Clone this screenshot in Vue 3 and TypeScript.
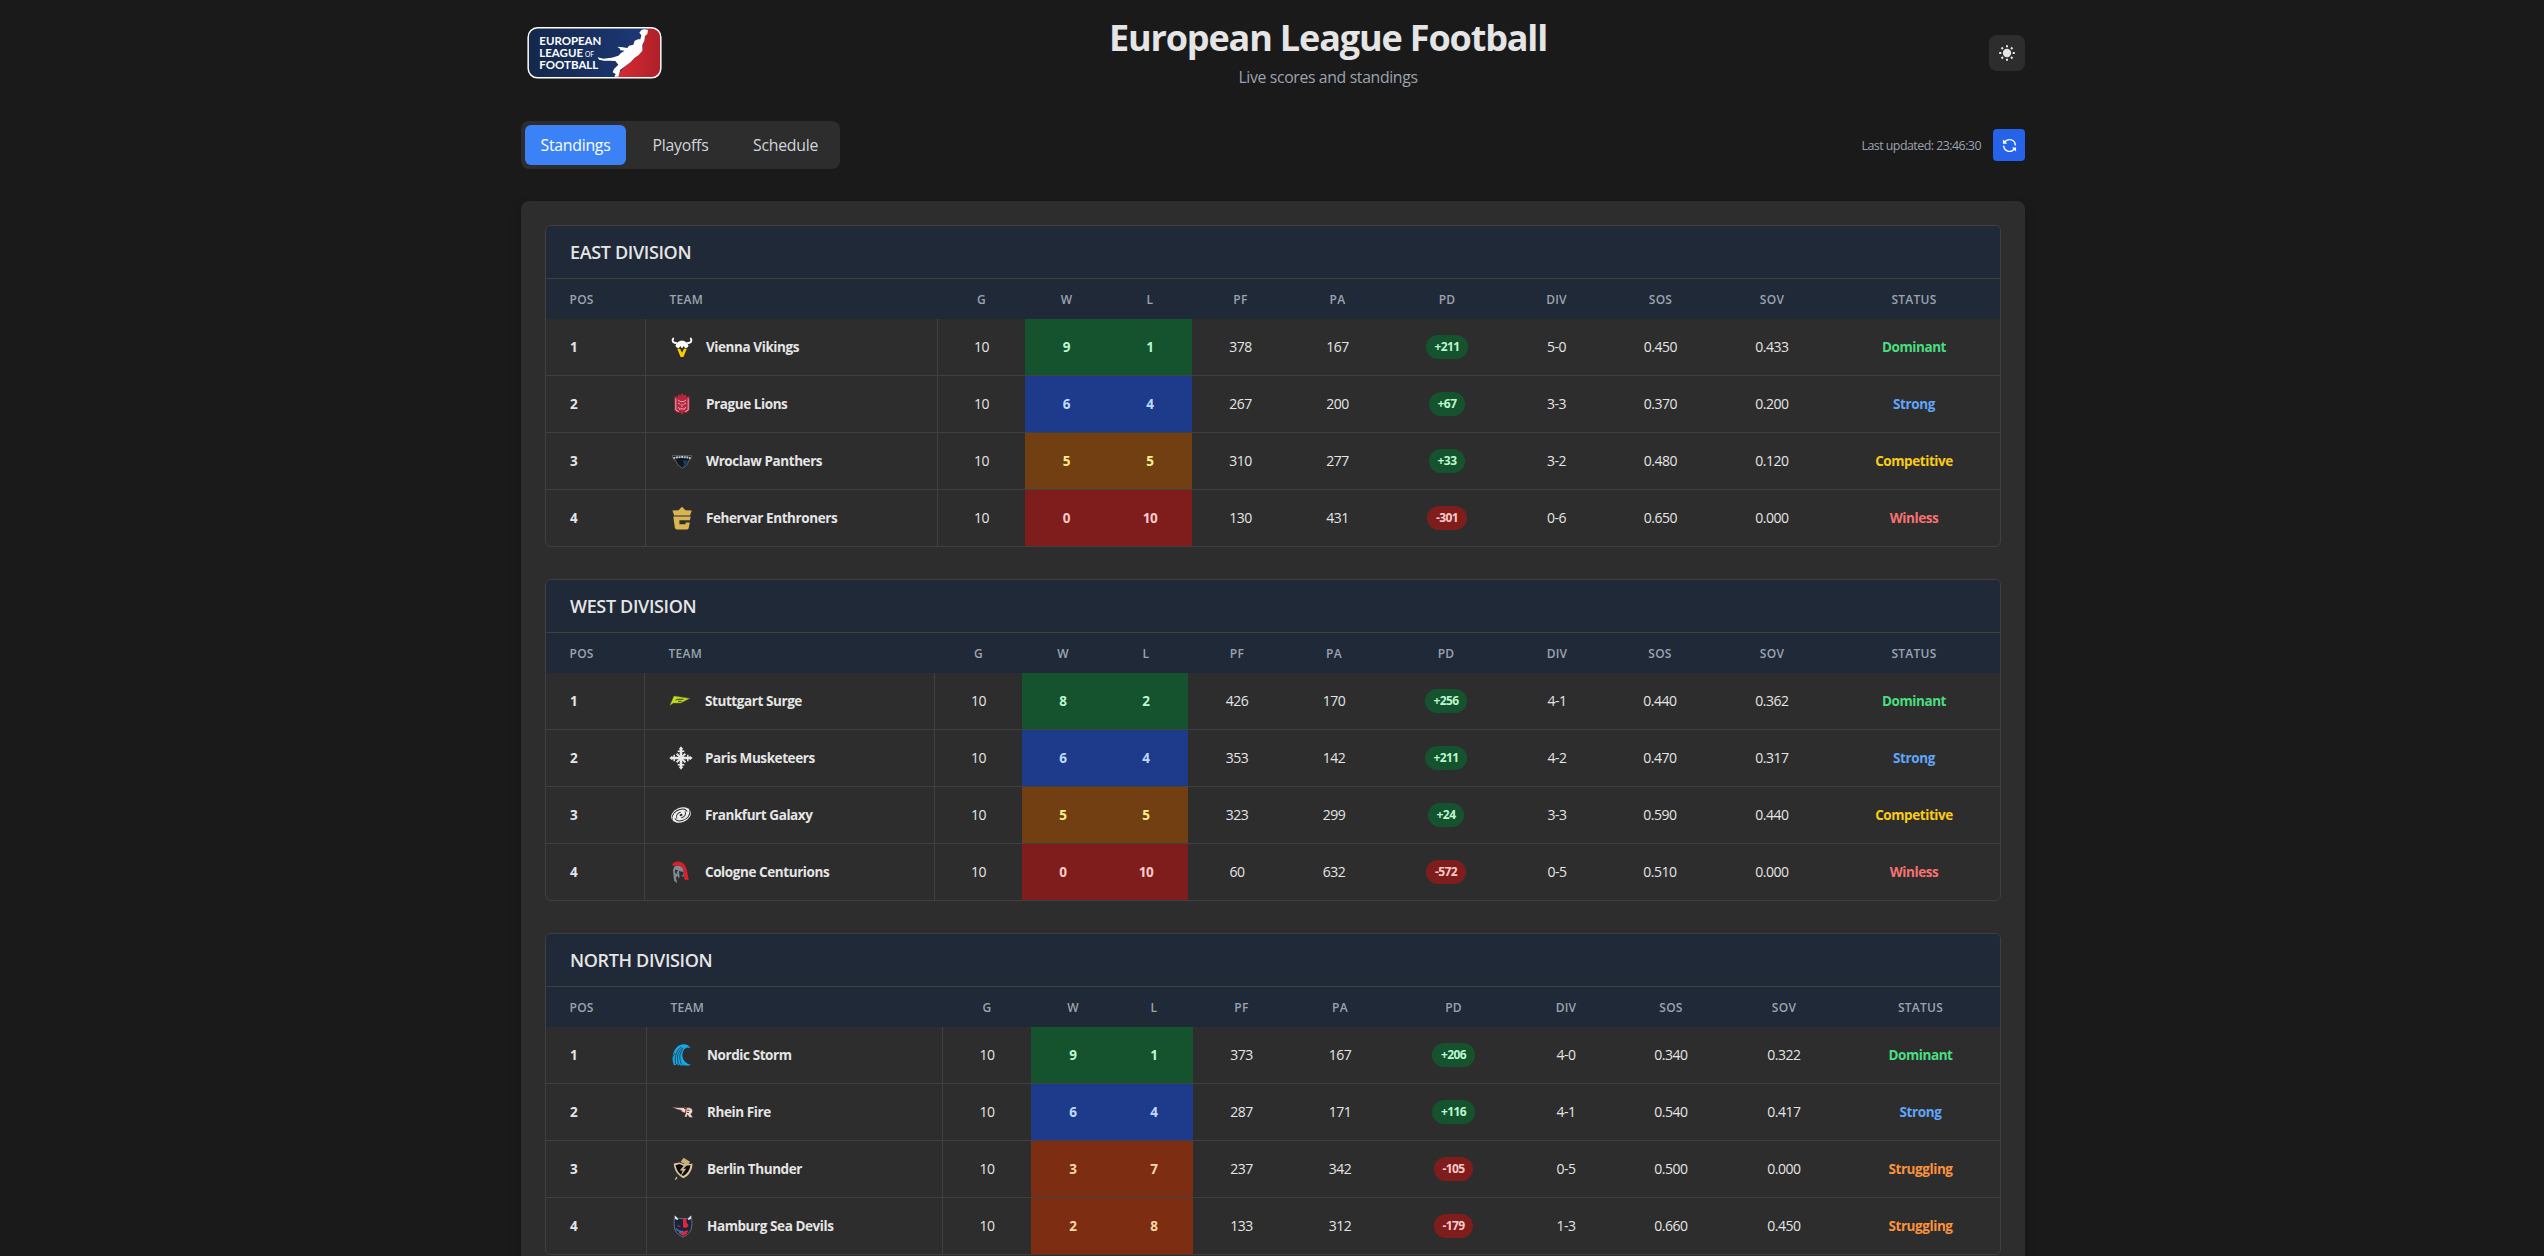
<script setup lang="ts">
import { ref } from 'vue'

type Tier = 'dominant' | 'strong' | 'competitive' | 'struggling' | 'winless'

interface Team {
  name: string
  logo: string
  w: number
  l: number
  pf: number
  pa: number
  pd: number
  div: string
  sos: string
  sov: string
  tier: Tier
}

interface Division {
  name: string
  cols: number[]
  teams: Team[]
}

const tabs = ['Standings', 'Playoffs', 'Schedule']
const active = ref('Standings')
const lastUpdated = ref('23:46:30')
const headings = ['Pos', 'Team', 'G', 'W', 'L', 'PF', 'PA', 'PD', 'DIV', 'SOS', 'SOV', 'Status']

const label: Record<Tier, string> = {
  dominant: 'Dominant',
  strong: 'Strong',
  competitive: 'Competitive',
  struggling: 'Struggling',
  winless: 'Winless',
}

const logos: Record<string, string> = {
  vikings:
    '<path fill="none" stroke="#fff" stroke-width="1.900" stroke-linecap="round" d="M3.200 3.600C1.600 5.600 3 8.200 6.400 7.900M20.800 3.600C22.400 5.600 21 8.200 17.600 7.900"/><path fill="#fff" d="M12 5.400c3 .3 5.400 2 6.600 5.400l-1.200 1.800-2.200.6-1.500-2.200L12 13.600 10.300 11l-1.500 2.200-2.200-.6-1.200-1.800c1.200-3.400 3.600-5.100 6.600-5.400z"/><path fill="#facc00" d="M7.200 13.800h2.900l1.900 4 1.900-4h2.900L13.400 22h-2.800z"/>',
  lions:
    '<path fill="#b3263c" d="M4.400 4.300 7.500 4.800 8.700 2.300l1.700 1.200L12 .4l1.600 3.100 1.700-1.200 1.200 2.500 3.100-.5v14L16.500 21l-3-.5L12 23.200l-1.500-2.700-3 .5-3.100-2.700z"/><g fill="none" stroke="#e3bcc2" stroke-width=".9"><path d="M5.800 6.500v11.500l3 1.600M18.200 6.500v11.500l-3 1.600M8 8l2.200 1.600h3.600L16 8M8 11l2.500 1.500M16 11l-2.500 1.500M8.200 15l2 3M15.800 15l-2 3M12 12v3M10.300 16.200l1.700 1 1.700-1"/></g>',
  panthers:
    '<path fill="#11161b" stroke="#707880" stroke-width=".7" d="M2 6.600 22 6.600 20.400 10.600 19 11 17 16 12.400 19.200 8 16 5.400 11 3.800 10.600Z"/><path fill="none" stroke="#c3c8cd" stroke-width="2" stroke-dasharray="2 .6" d="M3.400 9Q12 7.200 20.600 9"/><path fill="#164061" d="M12.500 11.500h5.500l-1.500 4-4 2.800 1.700-3.300z"/>',
  enthroners:
    '<path fill="#d9b552" d="M2.400 4.600 8.600 4.200 12 .7l3.400 3.500 6.400.4-1.800 4.800H4.200zM3.300 10.600h17.400l-.8 3.600H9.400v4h6.200v-1.600h4.200l-1.200 6-1.400.9H6.200L4.900 22.100z"/>',
  surge:
    '<path fill="#c9dc1f" stroke="#7d8a1c" stroke-width=".5" d="M1 16.200 5 7 20.600 9.400 11.600 14 4.400 14Z"/><path fill="none" stroke="#3b430d" stroke-width="1" d="M6.500 11.500 8 10.300h6.500M9 12.300h3.600"/>',
  musketeers:
    '<g fill="none" stroke="#e9e9e9"><path stroke-width="2.600" d="M12 2.500v19M2.500 12h19"/><path stroke-width="1.500" d="M8.700 5.200h6.600M8.700 18.800h6.600M5.200 8.700v6.600M18.800 8.700v6.600"/><path stroke-width="2" d="M7.600 7.600l8.800 8.800M16.400 7.600l-8.800 8.800"/></g><path fill="#e9e9e9" d="M12 .3l2.300 3H9.700zM12 23.700l2.300-3H9.700zM.3 12l3-2.300v4.600zM23.700 12l-3-2.300v4.600z"/>',
  galaxy:
    '<g transform="rotate(-22 12 12)"><ellipse cx="12" cy="12" rx="10.300" ry="7.300" fill="#ededed"/><g fill="none" stroke="#2d2d2d" stroke-linecap="round"><path stroke-width="1" d="M1.800 13.500C3 8 8 5.800 13 6.400c3.500.4 5.600 2 6 4.300M22.200 10.500C21 16 16 18.200 11 17.600c-3.500-.4-5.600-2-6-4.300"/><path stroke-width=".9" d="M7 13.500c-.2-3 2.500-4.600 5.500-4.300M17 10.500c.2 3-2.500 4.600-5.500 4.300"/></g><ellipse cx="12" cy="12" rx="1.500" ry="1.100" fill="#2d2d2d"/></g>',
  centurions:
    '<path fill="#7f8b91" d="M5.300 6.700C8 4.700 12 5 14 8l1.500 8.500-4-.5-3.300 3.200L7.800 23 5 20.500 4 10z"/><path fill="#2a2f33" d="M10 11l4.500 1v3l-4 1.500zM6 9.500l3.500 1-2 1.500 1 2-2.500-1zM7 17l2-1v3l-1.500 2z"/><path fill="#d6202b" d="M3 4.500C5.500 1 11.500.2 15.200 4.500 18.500 8.500 18.400 14 19.800 20l-3.500.3L15 18c.4-5.600-.3-9.200-3.200-11.300C9.500 5 6.500 5.200 4.600 6.200z"/>',
  storm:
    '<path fill="#12a9ea" d="M3.200 22.600C.5 17 1 9 6 4 10-.2 17.500.2 19.700 5.600c-2.200-2-5.300-1.500-7 1.400-3.200 5.300-.8 13.200 7.300 14.800-3 1.500-5 1.200-6.700 0l.2 1.300-2.600-1.500.3 1.700-3-2-.2 1.500-2-1.700z"/><g fill="none" stroke="#2d2d2d" stroke-width=".8"><path d="M4.500 21C3.500 14 5 7 10.500 4M7.400 21.200C5.500 14 6.500 8.500 12 4.800M10.600 21.500C8 16 8 9.500 12 6.500M1.500 14l2.500-4"/></g>',
  fire:
    '<path fill="#e9dcd7" stroke="#5a2a20" stroke-width=".4" d="M1 7c5 1.200 11 .4 17.200.8 4 .4 4.200 4.800 1.400 6.200l2.400 3.600-3.800-.4-1.600-2.600-1 2.400h-2l1-3.800-4.400-1.900.6-.9-4.800-1.200z"/><path fill="none" stroke="#812c26" stroke-width="1.100" d="M13 8.500h2.200l-.8 5.300M16.200 10.200h2.500M16 12.500h2"/>',
  thunder:
    '<path fill="#c8b078" d="m12.600.8 6.400 4-2 3.600L9.600 5zM5.300 19.800l1.300.7L5 23l-1.300-.8z"/><path fill="#d5c5a0" d="M2.800 6.600 8.500 5.400l4 1.700L19 7l2.400-.6c.3 6-2.900 12-9 14.800C6.500 18.500 3 13 2.800 6.600z"/><path fill="#0c0c0c" d="M4.600 8.200 8.700 7l3.600 1.700 7.200-.4c-.6 4.700-3 8.600-7.300 10.800C8 17 5.500 13 4.600 8.200z"/><path fill="#cdb77f" d="m14.500 6.600-5.800 6.900h2.800l-1.900 5.800 5.600-7.600h-2.800l4.400-4.400z"/>',
  devils:
    '<path fill="#17243c" stroke="#77818f" stroke-width=".8" d="M3.600 1.700 7.500 4.600h9L20.400 1.700c.8 6.500.6 10-.4 14-1.600 3.800-4.700 6-8 7.300-3.300-1.300-6.400-3.500-8-7.300-1-4-1.200-7.500-.4-14z"/><path fill="#fff" d="m4 1.700.2 3.200 2.300 1.200.6-1zM20 1.700l-.2 3.200-2.300 1.200-.6-1z"/><path fill="#e32636" d="m12 4.500 3.500.6v3.500l2.200 3-2.500 2.500-3.200-.8zM6 11l4 1.500-2.500.6zM12 17.500l5.500-1.500-2 4.200-3.500 1.600-3.500-2z"/><path fill="none" stroke="#4778b4" stroke-width="1.300" d="M5 14.500c2 3 4 3.300 7 3M8 19l4-1.800"/>',
}

function team(name: string, logo: string, w: number, l: number, pf: number, pa: number, pd: number, div: string, sos: string, sov: string, tier: Tier): Team {
  return { name, logo, w, l, pf, pa, pd, div, sos, sov, tier }
}

const divisions: Division[] = [
  {
    name: 'East Division',
    cols: [100, 292, 87, 83, 84, 97, 97, 122, 97, 111, 112, 172],
    teams: [
      team('Vienna Vikings', 'vikings', 9, 1, 378, 167, 211, '5-0', '0.450', '0.433', 'dominant'),
      team('Prague Lions', 'lions', 6, 4, 267, 200, 67, '3-3', '0.370', '0.200', 'strong'),
      team('Wroclaw Panthers', 'panthers', 5, 5, 310, 277, 33, '3-2', '0.480', '0.120', 'competitive'),
      team('Fehervar Enthroners', 'enthroners', 0, 10, 130, 431, -301, '0-6', '0.650', '0.000', 'winless'),
    ],
  },
  {
    name: 'West Division',
    cols: [99, 290, 87, 82, 84, 98, 96, 128, 94, 112, 112, 172],
    teams: [
      team('Stuttgart Surge', 'surge', 8, 2, 426, 170, 256, '4-1', '0.440', '0.362', 'dominant'),
      team('Paris Musketeers', 'musketeers', 6, 4, 353, 142, 211, '4-2', '0.470', '0.317', 'strong'),
      team('Frankfurt Galaxy', 'galaxy', 5, 5, 323, 299, 24, '3-3', '0.590', '0.440', 'competitive'),
      team('Cologne Centurions', 'centurions', 0, 10, 60, 632, -572, '0-5', '0.510', '0.000', 'winless'),
    ],
  },
  {
    name: 'North Division',
    cols: [101, 296, 88, 84, 78, 97, 100, 127, 98, 112, 114, 159],
    teams: [
      team('Nordic Storm', 'storm', 9, 1, 373, 167, 206, '4-0', '0.340', '0.322', 'dominant'),
      team('Rhein Fire', 'fire', 6, 4, 287, 171, 116, '4-1', '0.540', '0.417', 'strong'),
      team('Berlin Thunder', 'thunder', 3, 7, 237, 342, -105, '0-5', '0.500', '0.000', 'struggling'),
      team('Hamburg Sea Devils', 'devils', 2, 8, 133, 312, -179, '1-3', '0.660', '0.450', 'struggling'),
    ],
  },
]

const signed = (n: number): string => (n > 0 ? `+${n}` : `${n}`)
</script>

<template>
  <div class="page">
    <header class="top">
      <svg class="league-logo" viewBox="48 42 420 168" aria-label="European League of Football">
        <defs>
          <linearGradient id="navy" x1="0" x2="1" y1="0" y2="0">
            <stop offset="0" stop-color="#14284a" />
            <stop offset="1" stop-color="#1d3a7c" />
          </linearGradient>
          <linearGradient id="crimson" x1="0" x2="1" y1="0" y2="0">
            <stop offset="0" stop-color="#d92b34" />
            <stop offset="1" stop-color="#ad2028" />
          </linearGradient>
        </defs>
        <rect x="54" y="53" width="399" height="151" rx="28" fill="url(#navy)" />
        <path d="M412 54H424Q453 55 453 82V176Q452 204 424 204H318Q328 180 372 146 402 118 402 92Z" fill="url(#crimson)" />
        <rect x="54.500" y="53.500" width="398" height="150" rx="28" fill="none" stroke="#fff" stroke-width="4.500" />
        <path
          fill="#fff"
          d="M394 60Q404 55 414 60L412 72 405 78 403 92 397 105 397 122 386 135 374 143 362 156 346 168 330 180 329 186 325 200H313L317 192 308 187 312 177 325 164 316 153 300 152 282 152 267 149 263 142 280 146 305 143 325 137 333 129 344 122 331 121 330 116 322 110 338 112 352 114 357 107 370 104 374 92 384 88 391 88 394 76 388 68Z"
        />
        <g class="league-name">
          <text x="88" y="106" font-size="35" textLength="186" lengthAdjust="spacingAndGlyphs">EUROPEAN</text>
          <text x="88" y="142" font-size="35" textLength="131" lengthAdjust="spacingAndGlyphs">LEAGUE</text>
          <text x="225" y="142" font-size="20" textLength="27" class="thin">OF</text>
          <text x="88" y="178" font-size="35" textLength="177" lengthAdjust="spacingAndGlyphs">FOOTBALL</text>
        </g>
      </svg>
      <div class="heading">
        <h1>European League Football</h1>
        <p>Live scores and standings</p>
      </div>
      <button class="theme" aria-label="Toggle theme">
        <svg viewBox="0 0 16 16" width="16" height="16">
          <circle cx="8" cy="8" r="4.200" fill="#e5e5e5" />
          <path
            d="M8 .2v2.100M8 13.700v2.100M.2 8h2.100M13.700 8h2.100M2.500 2.500l1.500 1.500M12 12l1.500 1.500M2.500 13.500 4 12M12 4l1.500-1.500"
            stroke="#e5e5e5"
            stroke-width="2"
          />
        </svg>
      </button>
    </header>

    <nav class="bar">
      <div class="tabs">
        <button v-for="t in tabs" :key="t" class="tab" :class="{ active: t === active }" @click="active = t">{{ t }}</button>
      </div>
      <div class="update">
        <span>Last updated: {{ lastUpdated }}</span>
        <button class="refresh" aria-label="Refresh">
          <svg viewBox="0 0 16 16" width="15" height="15" fill="#fff">
            <path
              d="M1.705 8.005a.75.75 0 0 1 .834.656 5.500 5.500 0 0 0 9.592 2.970l-1.204-1.204a.25.25 0 0 1 .177-.427h3.646a.25.25 0 0 1 .25.25v3.646a.25.25 0 0 1-.427.177l-1.380-1.380A7.002 7.002 0 0 1 1.050 8.840a.75.75 0 0 1 .656-.834ZM8 2.500a5.487 5.487 0 0 0-4.131 1.869l1.204 1.204A.25.25 0 0 1 4.896 6H1.250A.25.25 0 0 1 1 5.750V2.104a.25.25 0 0 1 .427-.177l1.380 1.380A7.002 7.002 0 0 1 14.950 7.160a.75.75 0 0 1-1.490.178A5.500 5.500 0 0 0 8 2.500Z"
            />
          </svg>
        </button>
      </div>
    </nav>

    <main class="panel">
      <section v-for="d in divisions" :key="d.name" class="division">
        <h2>{{ d.name }}</h2>
        <table>
          <colgroup>
            <col v-for="(w, i) in d.cols" :key="i" :style="{ width: w + 'px' }" />
          </colgroup>
          <thead>
            <tr>
              <th v-for="h in headings" :key="h">{{ h }}</th>
            </tr>
          </thead>
          <tbody>
            <tr v-for="(t, i) in d.teams" :key="t.name">
              <td class="pos">{{ i + 1 }}</td>
              <td class="team">
                <div class="team-cell">
                  <svg class="crest" viewBox="0 0 24 24" v-html="logos[t.logo]"></svg>
                  <span>{{ t.name }}</span>
                </div>
              </td>
              <td>10</td>
              <td class="record" :class="t.tier">{{ t.w }}</td>
              <td class="record" :class="t.tier">{{ t.l }}</td>
              <td>{{ t.pf }}</td>
              <td>{{ t.pa }}</td>
              <td><span class="pill" :class="t.pd > 0 ? 'plus' : 'minus'">{{ signed(t.pd) }}</span></td>
              <td>{{ t.div }}</td>
              <td>{{ t.sos }}</td>
              <td>{{ t.sov }}</td>
              <td class="status" :class="'is-' + t.tier">{{ label[t.tier] }}</td>
            </tr>
          </tbody>
        </table>
      </section>
    </main>
  </div>
</template>

<style>
html,
body {
  background: #1a1a1a;
  overflow: hidden;
}
</style>

<style scoped>
.page {
  box-sizing: border-box;
  width: 1504px;
  height: 1256px;
  margin-left: 521px;
  font-family: 'Open Sans', 'Noto Sans', sans-serif;
  color: #e5e5e5;
}
button {
  border: 0;
  padding: 0;
  font: inherit;
  color: inherit;
  display: flex;
  align-items: center;
  justify-content: center;
}
.top {
  height: 121px;
  display: flex;
}
.league-logo {
  width: 140px;
  height: 56px;
  margin: 24px 0 0 5px;
}
.league-name {
  fill: #fff;
  font-family: Lato, sans-serif;
  font-weight: 700;
}
.league-name .thin {
  font-weight: 400;
}
.heading {
  width: 520px;
  padding-top: 11px;
  margin-left: 402px;
  text-align: center;
}
h1 {
  margin: 0;
  font-size: 36px;
  line-height: 54px;
  font-weight: 700;
  letter-spacing: -1.150px;
}
p {
  margin: 0;
  font-size: 15.800px;
  line-height: 24px;
  color: #9ca3af;
  letter-spacing: -0.350px;
}
.theme {
  width: 36px;
  height: 36px;
  margin: 35px 0 0 auto;
  border-radius: 8px;
  background: #2d2d2d;
}
.bar {
  height: 80px;
  display: flex;
  justify-content: space-between;
}
.tabs {
  box-sizing: border-box;
  width: 319px;
  height: 48px;
  padding: 4px;
  display: flex;
  gap: 4px;
  border-radius: 8px;
  background: #2d2d2d;
}
.tab {
  width: 101px;
  border-radius: 6px;
  background: transparent;
  font-size: 15.800px;
  letter-spacing: -0.250px;
  color: #d1d5db;
}
.tab.active {
  background: #3b82f6;
  color: #fff;
}
.update {
  height: 48px;
  display: flex;
  align-items: center;
  gap: 12px;
  font-size: 12.400px;
  letter-spacing: -0.520px;
  color: #9ca3af;
}
.refresh {
  width: 32px;
  height: 32px;
  border-radius: 4px;
  background: #2563eb;
}
.panel {
  box-sizing: border-box;
  height: 1079px;
  padding: 24px;
  border-radius: 8px;
  background: #2d2d2d;
  box-shadow: 0 4px 12px rgba(0, 0, 0, 0.2);
}
.division {
  border: 1px solid #404040;
  border-radius: 6px;
  overflow: hidden;
  margin-bottom: 32px;
}
h2 {
  margin: 0;
  height: 52px;
  padding-left: 24px;
  border-bottom: 1px solid #404040;
  background: #1f2937;
  font-size: 18px;
  line-height: 52px;
  font-weight: 650;
  text-transform: uppercase;
  letter-spacing: -0.350px;
}
table {
  width: 1454px;
  table-layout: fixed;
  border-spacing: 0;
}
th {
  box-sizing: border-box;
  height: 40px;
  padding: 1px 0 0;
  background: #1f2937;
  color: #9ca3af;
  font-size: 12px;
  font-weight: 600;
  line-height: 16px;
  text-transform: uppercase;
  letter-spacing: 0.250px;
}
th:nth-child(-n + 2) {
  padding-left: 23.500px;
  text-align: left;
}
td {
  box-sizing: border-box;
  height: 57px;
  padding: 0;
  border-bottom: 1px solid #404040;
  font-size: 14px;
  line-height: 20px;
  letter-spacing: -0.480px;
  text-align: center;
}
tr:last-child td {
  height: 56px;
  border-bottom: 0;
}
.pos,
.team {
  padding-left: 24px;
  border-right: 1px solid #404040;
  text-align: left;
}
.team-cell {
  display: flex;
  align-items: center;
  gap: 12px;
}
.crest {
  width: 24px;
  height: 24px;
}
.pos,
.team,
.record,
.status {
  font-size: 13.500px;
  font-weight: 700;
  letter-spacing: -0.420px;
}
.dominant { background: #14532d; color: #bbf7d0; }
.strong { background: #1e3a8a; color: #bfdbfe; }
.competitive { background: #713f12; color: #fef08a; }
.struggling { background: #7c2d12; color: #fed7aa; }
.winless { background: #7f1d1d; color: #fecaca; }
.pill {
  display: inline-block;
  padding: 2px 8.500px;
  border-radius: 12px;
  font-size: 12px;
  line-height: 20px;
  font-weight: 700;
  letter-spacing: -0.550px;
}
.plus { background: #14532d; color: #bbf7d0; }
.minus { background: #7f1d1d; color: #fecaca; }
.is-dominant { color: #4ade80; }
.is-strong { color: #60a5fa; }
.is-competitive { color: #facc15; }
.is-struggling { color: #fb923c; }
.is-winless { color: #f87171; }
</style>
